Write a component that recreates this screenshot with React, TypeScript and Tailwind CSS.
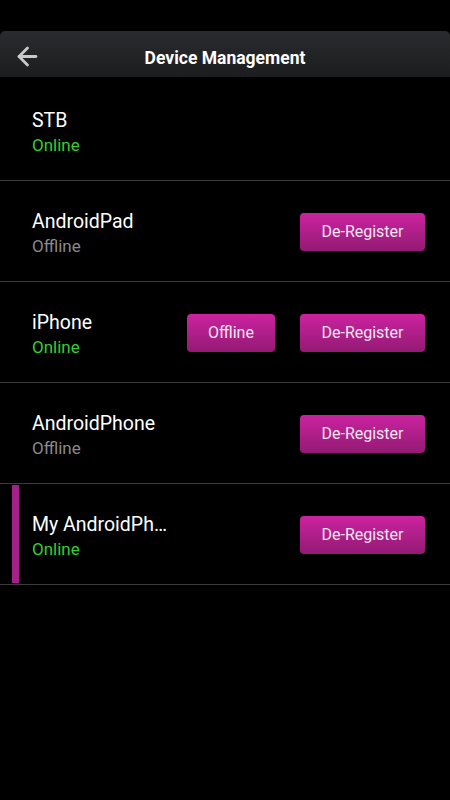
import { ArrowLeft } from "lucide-react";

type Device = {
  name: string;
  online: boolean;
  showStatusButton?: boolean;
  canDeregister: boolean;
  current?: boolean;
};

const devices: Device[] = [
  { name: "STB", online: true, canDeregister: false },
  { name: "AndroidPad", online: false, canDeregister: true },
  { name: "iPhone", online: true, showStatusButton: true, canDeregister: true },
  { name: "AndroidPhone", online: false, canDeregister: true },
  { name: "My AndroidPhone", online: true, canDeregister: true, current: true },
];

function PinkButton({ label, className }: { label: string; className?: string }) {
  return (
    <button
      className={
        "mt-[1px] h-[38px] rounded-[4px] bg-gradient-to-b from-[#cc23a0] to-[#931a74] text-[16px] text-[#f6e6f1] shadow-[0_1px_2px_rgba(0,0,0,0.6)] " +
        (className ?? "")
      }
    >
      {label}
    </button>
  );
}

export default function App() {
  return (
    <div
      className="min-h-[800px] w-[450px] bg-black pt-[31px]"
      style={{ fontFamily: "Roboto, 'Noto Sans', sans-serif" }}
    >
      <div className="relative flex h-[46px] items-center justify-center rounded-t-[5px] bg-gradient-to-b from-[#2a2b2e] to-[#1c1d1f]">
        <button className="absolute left-[13px] top-[11px] text-[#c9c9c9]">
          <ArrowLeft size={29} strokeWidth={2.3} />
        </button>
        <h1 className="pt-[8px] text-[17.5px] font-bold text-white">Device Management</h1>
      </div>

      <ul>
        {devices.map((d, i) => (
          <li
            key={d.name}
            className={
              "flex items-center border-b border-[#3a3a3a] " +
              (i === 0 ? "h-[104px]" : "h-[101px]")
            }
          >
            <div className="flex h-full w-[32px] items-stretch py-[1px] pl-[12px]">
              {d.current ? <div className="w-[7px] bg-[#a5218a]" /> : null}
            </div>
            <div className={"flex min-w-0 flex-1 flex-col pt-[5px] " + (i === 0 ? "pt-[8px]" : "")}>
              <span className="max-w-[146px] truncate text-[19.5px] leading-[25px] text-white">
                {d.name}
              </span>
              <span
                className={
                  "text-[17px] leading-[25px] " + (d.online ? "text-[#34cf2f]" : "text-[#8a8a8a]")
                }
              >
                {d.online ? "Online" : "Offline"}
              </span>
            </div>
            {d.showStatusButton ? (
              <PinkButton label="Offline" className="mr-[25px] w-[88px]" />
            ) : null}
            {d.canDeregister ? (
              <PinkButton label="De-Register" className="mr-[25px] w-[125px]" />
            ) : null}
          </li>
        ))}
      </ul>
    </div>
  );
}
